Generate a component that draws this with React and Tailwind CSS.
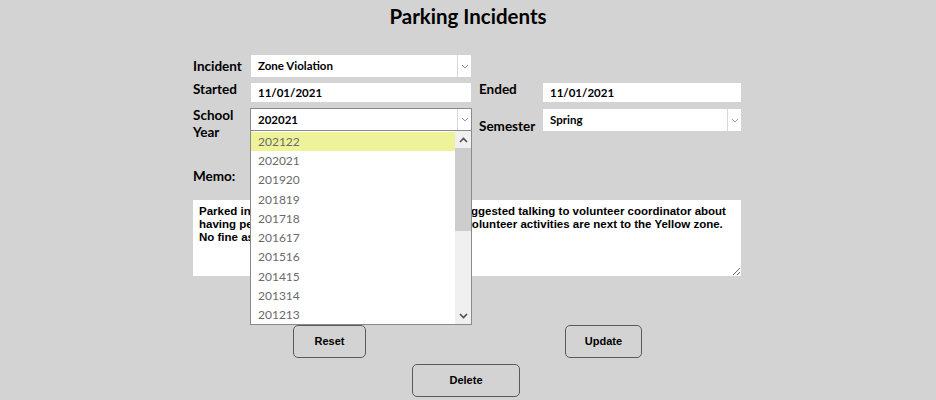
import { useState } from "react";

const years = ["202122", "202021", "201920", "201819", "201718", "201617", "201516", "201415", "201314", "201213"];

function Chevron({ className = "" }) {
  return (
    <svg width="8" height="5" viewBox="0 0 8 5" className={className}>
      <path d="M1 1 L4 4 L7 1" fill="none" stroke="#9a9a9a" strokeWidth="1" />
    </svg>
  );
}

function SelectBox({ value, width, bordered }) {
  return (
    <div
      className={`flex h-full bg-white ${bordered ? "border border-[#8a8a8a]" : ""}`}
      style={{ width }}
    >
      <div className="flex-1 flex items-center pl-[7px] text-[11.5px] font-bold text-black">{value}</div>
      <div className="w-[14px] border-l border-[#d8d8d8] flex items-center justify-center">
        <Chevron />
      </div>
    </div>
  );
}

const btnFont = { fontFamily: "'Liberation Sans', Arial, sans-serif" };

export default function App() {
  const [memo, setMemo] = useState(
    "Parked in Yellow zone during a volunteer shift. Suggested talking to volunteer coordinator about having permits issued to staff since many of the volunteer activities are next to the Yellow zone.\nNo fine assessed."
  );

  return (
    <div
      className="relative w-[936px] h-[400px] bg-[#d3d3d3] overflow-hidden"
      style={{ fontFamily: "Lato, 'DejaVu Sans', sans-serif" }}
    >
      <h1 className="pt-[4px] text-center text-[20.5px] font-bold text-black leading-[24px]">Parking Incidents</h1>

      <div className="ml-[193px] w-[548px] mt-[27px]">
        {/* Incident */}
        <div className="flex h-[22px]">
          <div className="w-[58px] flex items-center text-[13.5px] font-bold">Incident</div>
          <SelectBox value="Zone Violation" width={220} />
        </div>

        {/* Started / Ended */}
        <div className="flex h-[19px] mt-[6px]">
          <div className="w-[58px] text-[13.5px] font-bold leading-[14px] -mt-[1px]">Started</div>
          <div className="w-[220px] bg-white flex items-center pl-[7px] text-[11.5px] font-bold">11/01/2021</div>
          <div className="w-[72px] pl-[8px] text-[13.5px] font-bold leading-[14px] -mt-[1px]">Ended</div>
          <div className="w-[198px] bg-white flex items-center pl-[7px] text-[11.5px] font-bold">11/01/2021</div>
        </div>

        {/* School Year / Semester */}
        <div className="flex h-[23px] mt-[6px]">
          <div className="w-[57px] text-[13.5px] font-bold leading-[17px] -mt-[1px]">
            School
            <br />
            Year
          </div>
          <SelectBox value="202021" width={222} bordered />
          <div className="w-[71px] pl-[7px] text-[13.5px] font-bold flex items-end leading-[14px] translate-y-[2px]">Semester</div>
          <div className="h-[22px] mt-[1px]">
            <SelectBox value="Spring" width={198} />
          </div>
        </div>

        {/* Memo */}
        <div className="mt-[37px] text-[13.5px] font-bold leading-[16px]">Memo:</div>
        <textarea
          value={memo}
          onChange={(e) => setMemo(e.target.value)}
          className="mt-[16px] block w-[548px] h-[76px] bg-white px-[6px] pt-[5px] text-[11.5px] font-bold leading-[13px] text-black outline-none"
          style={{ fontFamily: "'Liberation Sans', Arial, sans-serif" }}
        />

        {/* Buttons */}
        <div className="flex mt-[49px] h-[33px]">
          <button className="ml-[100px] w-[73px] h-[33px] rounded-[5px] border border-[#5a5a5a] text-[11px] font-bold" style={btnFont}>Reset</button>
          <button className="ml-[199px] w-[77px] h-[33px] rounded-[5px] border border-[#5a5a5a] text-[11px] font-bold" style={btnFont}>Update</button>
        </div>
        <div className="flex mt-[6px]">
          <button className="ml-[219px] w-[108px] h-[33px] rounded-[5px] border border-[#5a5a5a] text-[11px] font-bold" style={btnFont}>Delete</button>
        </div>
      </div>

      {/* Open dropdown list for School Year */}
      <div className="absolute left-[250px] top-[131px] w-[222px] h-[194px] bg-white border border-[#8a8a8a] border-t-0 flex">
        <div className="flex-1 pt-[1px]">
          {years.map((y, i) => (
            <div
              key={y}
              className={`h-[19.3px] flex items-center pl-[7px] text-[12px] text-[#6a6a6a] ${i === 0 ? "bg-[#eef39a]" : ""}`}
            >
              {y}
            </div>
          ))}
        </div>
        <div className="w-[16px] bg-[#f0f0f0] flex flex-col">
          <div className="h-[17px] flex items-center justify-center">
            <svg width="9" height="6" viewBox="0 0 9 6">
              <path d="M1 5 L4.5 1.5 L8 5" fill="none" stroke="#505050" strokeWidth="1.6" />
            </svg>
          </div>
          <div className="h-[83px] bg-[#cdcdcd]" />
          <div className="flex-1" />
          <div className="h-[17px] flex items-center justify-center">
            <svg width="9" height="6" viewBox="0 0 9 6">
              <path d="M1 1 L4.5 4.5 L8 1" fill="none" stroke="#505050" strokeWidth="1.6" />
            </svg>
          </div>
        </div>
      </div>
    </div>
  );
}
